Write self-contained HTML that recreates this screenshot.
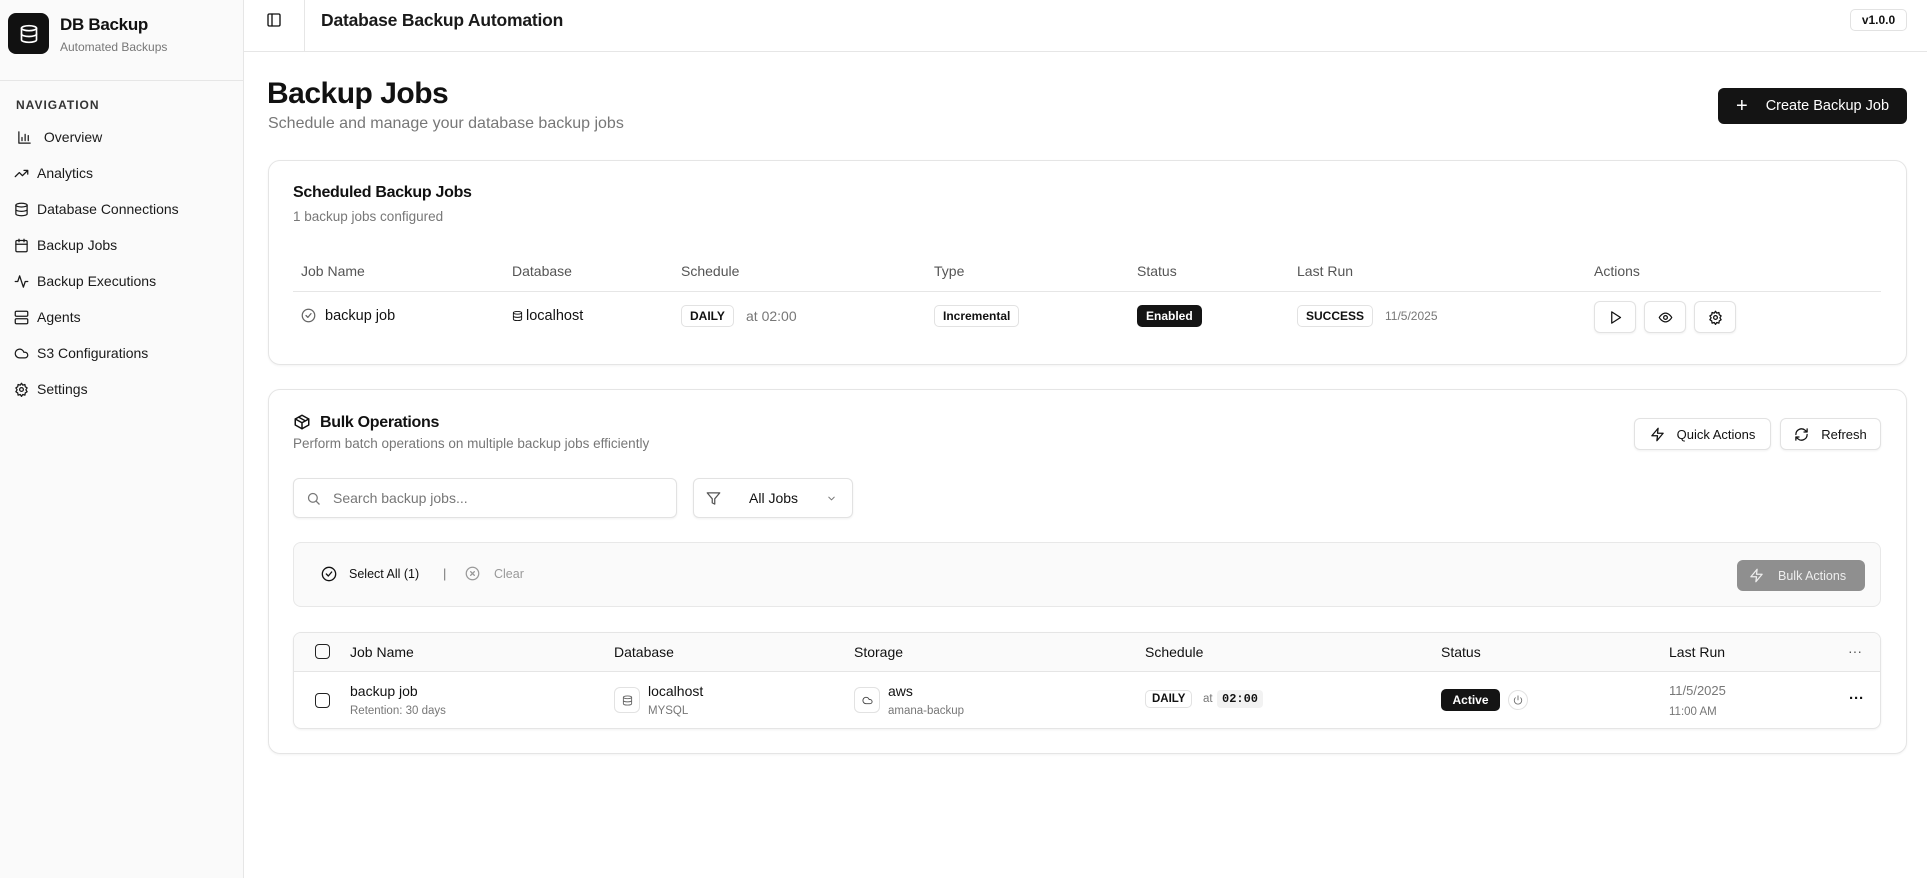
<!DOCTYPE html>
<html><head><meta charset="utf-8"><style>
*{box-sizing:border-box;margin:0;padding:0}
body{width:1927px;height:878px;background:#fff;font-family:"Liberation Sans",sans-serif;color:#111;position:relative;overflow:hidden}
.a{position:absolute}
.sb{left:0;top:0;width:244px;height:878px;background:#fafafa;border-right:1px solid #e6e6e6}
.nav{left:14px;font-size:14px;color:#1a1a1a;display:flex;align-items:center;gap:8px;height:20px}
.nav svg{width:15px;height:15px}
svg{fill:none;stroke:currentColor;stroke-width:2;stroke-linecap:round;stroke-linejoin:round}
.card{border:1px solid #e5e5e5;border-radius:12px;box-shadow:0 1px 2px rgba(0,0,0,.05);background:#fff}
.th{font-size:14px;color:#555}
.badge{border:1px solid #e2e2e2;border-radius:5px;font-size:12px;font-weight:bold;padding:3px 8px;display:inline-block}
.btn{border:1px solid #e2e2e2;border-radius:6px;background:#fff;box-shadow:0 1px 2px rgba(0,0,0,.06);display:flex;align-items:center;justify-content:center;gap:12px;font-size:13px}
.btn svg{width:15px;height:15px}
.cb{width:15px;height:15px;border:1.5px solid #222;border-radius:4px}
.mut{color:#777}
</style></head><body>
<div class="a sb"></div>
<div class="a" style="left:8px;top:13px;width:41px;height:41px;background:#111;border-radius:8px;color:#fff;display:flex;align-items:center;justify-content:center"><svg width="20" height="20" viewBox="0 0 24 24"><ellipse cx="12" cy="5" rx="9" ry="3"/><path d="M3 5v14a9 3 0 0 0 18 0V5"/><path d="M3 12a9 3 0 0 0 18 0"/></svg></div>
<div class="a" style="left:60px;top:15px;font-size:17px;font-weight:bold;letter-spacing:-.3px">DB Backup</div>
<div class="a mut" style="left:60px;top:40px;font-size:12px">Automated Backups</div>
<div class="a" style="left:0;top:80px;width:243px;border-top:1px solid #e6e6e6"></div>
<div class="a" style="left:16px;top:98px;font-size:12px;font-weight:bold;letter-spacing:1px;color:#333">NAVIGATION</div>
<div class="a nav" style="top:127px;left:17px"><svg viewBox="0 0 24 24"><path d="M3 3v18h18M8 17v-5M13 17V7M18 17v-8"/></svg>&nbsp;Overview</div>
<div class="a nav" style="top:163px"><svg viewBox="0 0 24 24"><path d="M22 7l-8.5 8.5-5-5L2 17M16 7h6v6"/></svg>Analytics</div>
<div class="a nav" style="top:199px"><svg viewBox="0 0 24 24"><ellipse cx="12" cy="5" rx="9" ry="3"/><path d="M3 5v14a9 3 0 0 0 18 0V5M3 12a9 3 0 0 0 18 0"/></svg>Database Connections</div>
<div class="a nav" style="top:235px"><svg viewBox="0 0 24 24"><rect x="3" y="4" width="18" height="18" rx="2"/><path d="M16 2v4M8 2v4M3 10h18"/></svg>Backup Jobs</div>
<div class="a nav" style="top:271px"><svg viewBox="0 0 24 24"><path d="M22 12h-4l-3 9L9 3l-3 9H2"/></svg>Backup Executions</div>
<div class="a nav" style="top:307px"><svg viewBox="0 0 24 24"><rect x="2" y="2" width="20" height="8" rx="2"/><rect x="2" y="14" width="20" height="8" rx="2"/></svg>Agents</div>
<div class="a nav" style="top:343px"><svg viewBox="0 0 24 24"><path d="M17.5 19H9a7 7 0 1 1 6.7-9h1.8a4.5 4.5 0 1 1 0 9z"/></svg>S3 Configurations</div>
<div class="a nav" style="top:379px"><svg viewBox="0 0 24 24"><circle cx="12" cy="12" r="3"/><path d="M12 2l2 3 3.5-1 .5 3.5 3 2-2 3 2 3-3 2-.5 3.5-3.5-1-2 3-2-3-3.5 1-.5-3.5-3-2 2-3-2-3 3-2 .5-3.5 3.5 1z"/></svg>Settings</div>

<div class="a" style="left:244px;top:51px;width:1683px;border-top:1px solid #e6e6e6"></div>
<div class="a" style="left:304px;top:0;height:51px;border-left:1px solid #e6e6e6"></div>
<svg class="a" style="left:266px;top:12px" width="16" height="16" viewBox="0 0 24 24"><rect x="3" y="3" width="18" height="18" rx="2"/><path d="M9 3v18"/></svg>
<div class="a" style="left:321px;top:10px;font-size:17.5px;font-weight:bold;letter-spacing:-.2px;color:#1a1a1a">Database Backup Automation</div>
<div class="a" style="left:1850px;top:9px;width:57px;height:22px;border:1px solid #e2e2e2;border-radius:5px;font-size:12px;font-weight:bold;display:flex;align-items:center;justify-content:center">v1.0.0</div>

<div class="a" style="left:267px;top:77px;font-size:30px;font-weight:bold;letter-spacing:-.5px">Backup Jobs</div>
<div class="a mut" style="left:268px;top:115px;font-size:16px">Schedule and manage your database backup jobs</div>
<div class="a" style="left:1718px;top:88px;width:189px;height:36px;background:#141414;border-radius:6px;color:#fff;font-size:14.5px;display:flex;align-items:center;gap:18px;padding-left:18px"><span style="font-size:20px;font-weight:300">+</span>Create Backup Job</div>

<div class="a card" style="left:268px;top:160px;width:1639px;height:205px"></div>
<div class="a" style="left:293px;top:184px;font-size:16px;font-weight:bold;letter-spacing:-.3px">Scheduled Backup Jobs</div>
<div class="a mut" style="left:293px;top:209px;font-size:13.5px">1 backup jobs configured</div>
<div class="a th" style="left:301px;top:263px">Job Name</div>
<div class="a th" style="left:512px;top:263px">Database</div>
<div class="a th" style="left:681px;top:263px">Schedule</div>
<div class="a th" style="left:934px;top:263px">Type</div>
<div class="a th" style="left:1137px;top:263px">Status</div>
<div class="a th" style="left:1297px;top:263px">Last Run</div>
<div class="a th" style="left:1594px;top:263px">Actions</div>
<div class="a" style="left:293px;top:291px;width:1588px;border-top:1px solid #e6e6e6"></div>
<svg class="a" style="left:301px;top:308px;color:#666" width="15" height="15" viewBox="0 0 24 24"><circle cx="12" cy="12" r="10"/><path d="M8 12l3 3 5-6"/></svg>
<div class="a" style="left:325px;top:308px;font-size:14.5px">backup job</div>
<svg class="a" style="left:512px;top:310px" width="11" height="12" viewBox="0 0 24 24"><ellipse cx="12" cy="5" rx="9" ry="3"/><path d="M3 5v14a9 3 0 0 0 18 0V5M3 12a9 3 0 0 0 18 0"/></svg>
<div class="a" style="left:526px;top:308px;font-size:14.5px">localhost</div>
<div class="a badge" style="left:681px;top:305px">DAILY</div>
<div class="a mut" style="left:746px;top:308px;font-size:14px">at 02:00</div>
<div class="a badge" style="left:934px;top:305px;font-weight:600">Incremental</div>
<div class="a badge" style="left:1137px;top:305px;background:#141414;color:#fff;border-color:#141414">Enabled</div>
<div class="a badge" style="left:1297px;top:305px">SUCCESS</div>
<div class="a mut" style="left:1385px;top:309px;font-size:12px">11/5/2025</div>
<div class="a btn" style="left:1594px;top:301px;width:42px;height:32px"><svg viewBox="0 0 24 24"><path d="M6 3l14 9-14 9z"/></svg></div>
<div class="a btn" style="left:1644px;top:301px;width:42px;height:32px"><svg viewBox="0 0 24 24"><path d="M2 12s4-7 10-7 10 7 10 7-4 7-10 7S2 12 2 12z"/><circle cx="12" cy="12" r="3"/></svg></div>
<div class="a btn" style="left:1694px;top:301px;width:42px;height:32px"><svg viewBox="0 0 24 24"><circle cx="12" cy="12" r="3"/><path d="M12 2l2 3 3.5-1 .5 3.5 3 2-2 3 2 3-3 2-.5 3.5-3.5-1-2 3-2-3-3.5 1-.5-3.5-3-2 2-3-2-3 3-2 .5-3.5 3.5 1z"/></svg></div>

<div class="a card" style="left:268px;top:389px;width:1639px;height:365px"></div>
<svg class="a" style="left:293px;top:413px" width="18" height="18" viewBox="0 0 24 24"><path d="M21 8l-9-5-9 5v8l9 5 9-5z"/><path d="M3 8l9 5 9-5M12 13v8M7.5 5.5l9 5"/></svg>
<div class="a" style="left:320px;top:414px;font-size:16px;font-weight:bold;letter-spacing:-.3px">Bulk Operations</div>
<div class="a mut" style="left:293px;top:436px;font-size:13.5px">Perform batch operations on multiple backup jobs efficiently</div>
<div class="a btn" style="left:1634px;top:418px;width:137px;height:32px"><svg viewBox="0 0 24 24"><path d="M13 2L3 14h9l-1 8 10-12h-9z"/></svg>Quick Actions</div>
<div class="a btn" style="left:1780px;top:418px;width:101px;height:32px"><svg viewBox="0 0 24 24"><path d="M3 12a9 9 0 0 1 15-6.7L21 8M21 3v5h-5M21 12a9 9 0 0 1-15 6.7L3 16M3 21v-5h5"/></svg>Refresh</div>
<div class="a btn" style="left:293px;top:478px;width:384px;height:40px;justify-content:flex-start;padding-left:12px;color:#777;font-size:14px"><svg viewBox="0 0 24 24"><circle cx="11" cy="11" r="7"/><path d="M21 21l-4.3-4.3"/></svg>Search backup jobs...</div>
<div class="a btn" style="left:693px;top:478px;width:160px;height:40px;justify-content:flex-start;padding-left:12px;gap:28px;font-size:14px"><svg style="color:#555" viewBox="0 0 24 24"><path d="M22 3H2l8 9.5V19l4 2v-8.5z"/></svg>All Jobs<svg style="width:11px;color:#777" viewBox="0 0 24 24"><path d="M6 9l6 6 6-6"/></svg></div>

<div class="a" style="left:293px;top:542px;width:1588px;height:65px;background:#fafafa;border:1px solid #e8e8e8;border-radius:8px"></div>
<svg class="a" style="left:321px;top:566px" width="16" height="16" viewBox="0 0 24 24"><circle cx="12" cy="12" r="10"/><path d="M8 12l3 3 5-6"/></svg>
<div class="a" style="left:349px;top:567px;font-size:12.5px">Select All (1)</div>
<div class="a mut" style="left:443px;top:566px;font-size:13px">|</div>
<svg class="a" style="left:465px;top:566px;color:#999" width="15" height="15" viewBox="0 0 24 24"><circle cx="12" cy="12" r="10"/><path d="M15 9l-6 6M9 9l6 6"/></svg>
<div class="a" style="left:494px;top:567px;font-size:12.5px;color:#999">Clear</div>
<div class="a" style="left:1737px;top:560px;width:128px;height:31px;background:#8f8f8f;border-radius:6px;color:#eee;font-size:12.5px;display:flex;align-items:center;gap:14px;padding-left:12px"><svg width="15" height="15" viewBox="0 0 24 24"><path d="M13 2L3 14h9l-1 8 10-12h-9z"/></svg>Bulk Actions</div>

<div class="a" style="left:293px;top:632px;width:1588px;height:97px;border:1px solid #e5e5e5;border-radius:8px;box-shadow:0 1px 2px rgba(0,0,0,.06);overflow:hidden"><div style="height:39px;background:#fafafa;border-bottom:1px solid #e5e5e5"></div></div>
<div class="a cb" style="left:315px;top:644px"></div>
<div class="a" style="left:350px;top:644px;font-size:14px;font-weight:500">Job Name</div>
<div class="a" style="left:614px;top:644px;font-size:14px;font-weight:500">Database</div>
<div class="a" style="left:854px;top:644px;font-size:14px;font-weight:500">Storage</div>
<div class="a" style="left:1145px;top:644px;font-size:14px;font-weight:500">Schedule</div>
<div class="a" style="left:1441px;top:644px;font-size:14px;font-weight:500">Status</div>
<div class="a" style="left:1669px;top:644px;font-size:14px;font-weight:500">Last Run</div>
<div class="a" style="left:1848px;top:643px;font-size:14px;color:#555">···</div>
<div class="a cb" style="left:315px;top:693px"></div>
<div class="a" style="left:350px;top:683px;font-size:14px">backup job</div>
<div class="a mut" style="left:350px;top:705px;font-size:11.5px">Retention: 30 days</div>
<div class="a" style="left:614px;top:687px;width:26px;height:26px;border:1px solid #e2e2e2;border-radius:6px;display:flex;align-items:center;justify-content:center;color:#666"><svg width="11" height="11" viewBox="0 0 24 24"><ellipse cx="12" cy="5" rx="9" ry="3"/><path d="M3 5v14a9 3 0 0 0 18 0V5M3 12a9 3 0 0 0 18 0"/></svg></div>
<div class="a" style="left:648px;top:683px;font-size:14px">localhost</div>
<div class="a mut" style="left:648px;top:705px;font-size:11.5px">MYSQL</div>
<div class="a" style="left:854px;top:687px;width:26px;height:26px;border:1px solid #e2e2e2;border-radius:6px;display:flex;align-items:center;justify-content:center;color:#444"><svg width="11" height="11" viewBox="0 0 24 24"><path d="M17.5 19H9a7 7 0 1 1 6.7-9h1.8a4.5 4.5 0 1 1 0 9z"/></svg></div>
<div class="a" style="left:888px;top:683px;font-size:14px">aws</div>
<div class="a mut" style="left:888px;top:705px;font-size:11.5px">amana-backup</div>
<div class="a badge" style="left:1145px;top:690px;font-size:11.5px;padding:2px 6px">DAILY</div>
<div class="a mut" style="left:1203px;top:693px;font-size:11.5px">at</div>
<div class="a" style="left:1217px;top:690px;background:#f2f2f2;border-radius:4px;padding:2px 5px;font-family:'Liberation Mono',monospace;font-size:12px;font-weight:bold">02:00</div>
<div class="a" style="left:1441px;top:689px;width:59px;height:22px;background:#141414;border-radius:5px;color:#fff;font-size:12px;font-weight:bold;display:flex;align-items:center;justify-content:center">Active</div>
<div class="a" style="left:1508px;top:690px;width:20px;height:20px;border:1px solid #e2e2e2;border-radius:50%;display:flex;align-items:center;justify-content:center;color:#666"><svg width="10" height="10" viewBox="0 0 24 24"><path d="M12 2v10M18.4 6.6a9 9 0 1 1-12.8 0"/></svg></div>
<div class="a mut" style="left:1669px;top:683px;font-size:13px">11/5/2025</div>
<div class="a mut" style="left:1669px;top:706px;font-size:11.5px">11:00 AM</div>
<div class="a" style="left:1849px;top:690px;font-size:15px;font-weight:bold">···</div>
</body></html>
